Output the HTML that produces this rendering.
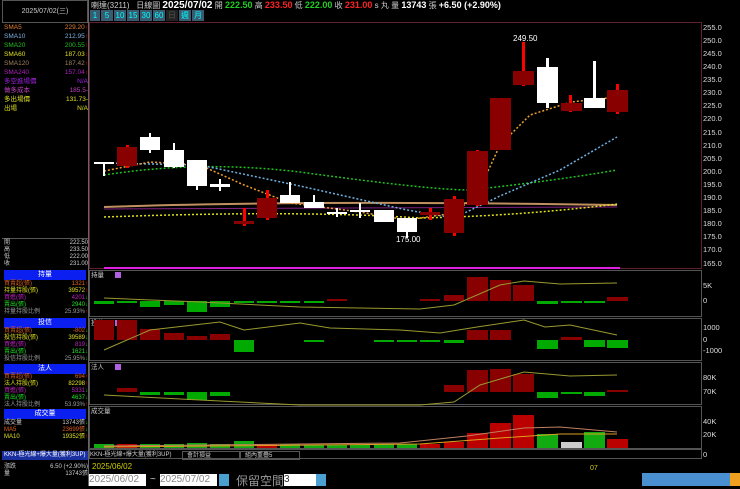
<!DOCTYPE html><html><head><meta charset="utf-8"><style>
*{margin:0;padding:0;box-sizing:border-box}
body{width:740px;height:486px;background:#000;overflow:hidden;position:relative;font-family:"Liberation Sans","Noto Sans CJK TC",sans-serif;font-size:8px;color:#ccc}
.a{position:absolute;white-space:nowrap}
.row{position:absolute;left:4px;width:84px;height:9px;font-size:6.5px;line-height:8px}
.s .row{line-height:7px;height:7px;font-size:6px}
.row span{position:absolute;right:0}
.hd{position:absolute;left:4px;width:82px;height:10px;background:#0a1ff0;color:#fff;text-align:center;font-size:7px;line-height:10px}
</style></head><body>
<div class="a" style="left:0;top:0;width:89px;height:486px;border-right:1px solid #666"></div>
<div class="a" style="left:2px;top:0;width:86px;height:23px;border:1px solid #555;color:#ccc;font-size:7px;text-align:center;line-height:21px">2025/07/02(三)</div>
<div class="row" style="top:24px;color:#e08030">SMA5<span>229.20<b style="color:#f00">↑</b></span></div>
<div class="row" style="top:33px;color:#7fb0e0">SMA10<span>212.95<b style="color:#f00">↑</b></span></div>
<div class="row" style="top:42px;color:#20c020">SMA20<span>200.55<b style="color:#f00">↑</b></span></div>
<div class="row" style="top:51px;color:#e0e020">SMA60<span>187.03<b style="color:#f00">↑</b></span></div>
<div class="row" style="top:60px;color:#a08060">SMA120<span>187.42<b style="color:#f00">↑</b></span></div>
<div class="row" style="top:69px;color:#b020c0">SMA240<span>157.04<b style="color:#f00">↑</b></span></div>
<div class="row" style="top:78px;color:#a020e0">多空進場價<span>N/A</span></div>
<div class="row" style="top:87px;color:#c040c0">做多成本<span>185.5-</span></div>
<div class="row" style="top:96px;color:#e0e020">多出場價<span>131.73-</span></div>
<div class="row" style="top:105px;color:#e0e020">出場<span>N/A</span></div>
<div class="a" style="left:2px;top:238px;width:86px;height:1px;background:#555"></div>
<div class="s">
<div class="row" style="top:240px">開<span>222.50</span></div>
<div class="row" style="top:247px">高<span>233.50</span></div>
<div class="row" style="top:254px">低<span>222.00</span></div>
<div class="row" style="top:261px">收<span>231.00</span></div>
<div class="hd" style="top:270px">持量</div>
<div class="row" style="top:281px;color:#e06020">買賣超(張)<span>1321<b style="color:#f00">↑</b></span></div>
<div class="row" style="top:288px;color:#e0e020">持量持股(張)<span>39572<b style="color:#f00">↑</b></span></div>
<div class="row" style="top:295px;color:#c020c0">買進(張)<span>4201<b style="color:#0c0">↓</b></span></div>
<div class="row" style="top:302px;color:#20e020">賣出(張)<span>2940<b style="color:#0c0">↓</b></span></div>
<div class="row" style="top:309px;color:#999">持量持股比例<span>25.93%<b style="color:#f00">↑</b></span></div>
<div class="hd" style="top:318px">投信</div>
<div class="row" style="top:328px;color:#e06020">買賣超(張)<span>-802<b style="color:#0c0">↓</b></span></div>
<div class="row" style="top:335px;color:#e0e020">投信持股(張)<span>39589<b style="color:#0c0">↓</b></span></div>
<div class="row" style="top:342px;color:#c020c0">買進(張)<span>819<b style="color:#0c0">↓</b></span></div>
<div class="row" style="top:349px;color:#20e020">賣出(張)<span>1621<b style="color:#0c0">↓</b></span></div>
<div class="row" style="top:356px;color:#999">投信持股比例<span>25.95%<b style="color:#0c0">↓</b></span></div>
<div class="hd" style="top:364px">法人</div>
<div class="row" style="top:374px;color:#e06020">買賣超(張)<span>694<b style="color:#f00">↑</b></span></div>
<div class="row" style="top:381px;color:#e0e020">法人持股(張)<span>82298<b style="color:#f00">↑</b></span></div>
<div class="row" style="top:388px;color:#c020c0">買進(張)<span>5331<b style="color:#0c0">↓</b></span></div>
<div class="row" style="top:395px;color:#20e020">賣出(張)<span>4637<b style="color:#0c0">↓</b></span></div>
<div class="row" style="top:402px;color:#999">法人持股比例<span>53.93%<b style="color:#f00">↑</b></span></div>
<div class="hd" style="top:409px">成交量</div>
<div class="row" style="top:420px;color:#ccc">成交量<span>13743張<b style="color:#0c0">↓</b></span></div>
<div class="row" style="top:427px;color:#e06020">MA5<span>23699張<b style="color:#0c0">↓</b></span></div>
<div class="row" style="top:434px;color:#e0e020">MA10<span>19352張<b style="color:#f00">↑</b></span></div>
<div class="row" style="top:464px">漲跌<span>6.50 (+2.90%)</span></div>
<div class="row" style="top:471px">量<span>13743張</span></div>
</div>
<div class="a" style="left:2px;top:451px;width:86px;height:9px;background:#1a2fa0;color:#fff;font-size:6px;line-height:9px;padding-left:2px">KKN-極光線+爆大量(獲利3UP)</div>
<div class="a" style="left:91px;top:0;font-size:8px;line-height:10px;color:#ccc">喇達(3211)&nbsp;&nbsp;&nbsp;日線圖 <b style="color:#fff;font-size:10px">2025/07/02</b> 開 <b style="color:#2c2;font-size:9px">222.50</b> 高 <b style="color:#f22;font-size:9px">233.50</b> 低 <b style="color:#2c2;font-size:9px">222.00</b> 收 <b style="color:#f22;font-size:9px">231.00</b> s 丸 量 <b style="color:#fff;font-size:9px">13743</b> 張 <b style="color:#fff;font-size:9px">+6.50 (+2.90%)</b></div>
<div class="a" style="left:90px;top:10px;height:11px;display:flex;gap:1px">
<span style="background:#3a5a70;color:#0ff;width:10px;font-size:8px;text-align:center;line-height:11px">1</span><span style="background:#3a5a70;color:#0ff;width:12px;text-align:center;line-height:11px">5</span><span style="background:#3a5a70;color:#0ff;width:12px;text-align:center;line-height:11px">10</span><span style="background:#3a5a70;color:#0ff;width:12px;text-align:center;line-height:11px">15</span><span style="background:#3a5a70;color:#0ff;width:12px;text-align:center;line-height:11px">30</span><span style="background:#3a5a70;color:#0ff;width:12px;text-align:center;line-height:11px">60</span><span style="background:#222;color:#555;width:12px;text-align:center;line-height:11px">日</span><span style="background:#3a5a70;color:#0ff;width:12px;text-align:center;line-height:11px">週</span><span style="background:#3a5a70;color:#0ff;width:12px;text-align:center;line-height:11px">月</span></div>
<svg class="a" style="left:0;top:0" width="740" height="486" font-family="Liberation Sans" font-size="7.5">
<rect x="89.5" y="22.5" width="243" height="0" stroke="#602030"/>
<rect x="89.5" y="22.5" width="612" height="246" fill="none" stroke="#602030"/>
<g fill="#ddd"><text x="703" y="30">255.0</text><text x="703" y="43">250.0</text><text x="703" y="56">245.0</text><text x="703" y="69">240.0</text><text x="703" y="82">235.0</text><text x="703" y="95">230.0</text><text x="703" y="108">225.0</text><text x="703" y="121">220.0</text><text x="703" y="135">215.0</text><text x="703" y="148">210.0</text><text x="703" y="161">205.0</text><text x="703" y="174">200.0</text><text x="703" y="187">195.0</text><text x="703" y="200">190.0</text><text x="703" y="213">185.0</text><text x="703" y="226">180.0</text><text x="703" y="239">175.0</text><text x="703" y="252">170.0</text><text x="703" y="266">165.0</text></g>
<path d="M104 207 Q300 200 617 205" stroke="#c09060" stroke-width="2" fill="none"/>
<path d="M104 209 L617 207" stroke="#802080" stroke-width="1" fill="none"/>
<path d="M104 217 Q300 210 420 218 Q520 216 617 204" stroke="#e0e020" stroke-width="1.5" stroke-dasharray="2,2" fill="none"/>
<path d="M104 175 Q200 160 300 172 Q430 190 470 190 Q560 180 617 170" stroke="#20c020" stroke-width="1.5" stroke-dasharray="2,2" fill="none"/>
<path d="M104 163 L200 165 L300 186 L407 210 L454 218 L500 196 L560 170 L617 137" stroke="#70b0e0" stroke-width="1.5" stroke-dasharray="2,2" fill="none"/>
<path d="M104 171 L150 162 L200 165 L244 185 L290 203 L360 212 L407 220 L454 213 L477 195 L500 145 L530 115 L571 102 L617 97" stroke="#f0a030" stroke-width="1.5" stroke-dasharray="2,2" fill="none"/>
<g fill="#fff" stroke="none">
<rect x="103" y="162" width="2" height="14"/><rect x="94" y="162" width="20" height="2"/>
<rect x="149" y="133" width="2" height="20"/><rect x="140" y="137" width="20" height="13"/>
<rect x="173" y="143" width="2" height="25"/><rect x="164" y="150" width="20" height="17"/>
<rect x="196" y="160" width="2" height="30"/><rect x="187" y="160" width="20" height="26"/>
<rect x="219" y="179" width="2" height="12"/><rect x="210" y="184" width="20" height="3"/>
<rect x="289" y="182" width="2" height="21"/><rect x="280" y="195" width="20" height="8"/>
<rect x="313" y="195" width="2" height="12"/><rect x="304" y="202" width="20" height="6"/>
<rect x="336" y="208" width="2" height="9"/><rect x="327" y="212" width="20" height="2"/>
<rect x="359" y="203" width="2" height="15"/><rect x="350" y="210" width="20" height="2"/>
<rect x="383" y="210" width="2" height="12"/><rect x="374" y="210" width="20" height="12"/>
<rect x="406" y="218" width="2" height="20"/><rect x="397" y="218" width="20" height="14"/>
<rect x="546" y="58" width="3" height="50"/><rect x="537" y="67" width="21" height="36"/>
<rect x="593" y="61" width="3" height="45"/><rect x="584" y="98" width="21" height="10"/>
</g>
<g>
<rect x="126" y="145" width="3" height="23" fill="#f00"/><rect x="117" y="147" width="20" height="19" fill="#800"/>
<rect x="243" y="208" width="3" height="18" fill="#f00"/><rect x="234" y="221" width="20" height="3" fill="#800"/>
<rect x="266" y="190" width="3" height="30" fill="#f00"/><rect x="257" y="198" width="20" height="20" fill="#800"/>
<rect x="429" y="208" width="3" height="12" fill="#f00"/><rect x="420" y="212" width="20" height="3" fill="#800"/>
<rect x="453" y="196" width="3" height="40" fill="#f00"/><rect x="444" y="199" width="20" height="34" fill="#800"/>
<rect x="476" y="150" width="3" height="56" fill="#f00"/><rect x="467" y="151" width="21" height="54" fill="#800"/>
<rect x="499" y="98" width="3" height="52" fill="#f00"/><rect x="490" y="98" width="21" height="52" fill="#800"/>
<rect x="522" y="42" width="3" height="44" fill="#f00"/><rect x="513" y="71" width="21" height="14" fill="#800"/>
<rect x="569" y="95" width="3" height="17" fill="#f00"/><rect x="561" y="103" width="21" height="8" fill="#800"/>
<rect x="616" y="84" width="3" height="30" fill="#f00"/><rect x="607" y="90" width="21" height="22" fill="#800"/>
</g>
<text x="513" y="41" fill="#fff" font-size="8">249.50</text>
<text x="396" y="242" fill="#fff" font-size="8">175.00</text>
<rect x="104" y="267" width="516" height="2" fill="#e020e0"/>
<g fill="none" stroke="#555"><rect x="89.5" y="270.5" width="612" height="46"/><rect x="89.5" y="318.5" width="612" height="42"/><rect x="89.5" y="362.5" width="612" height="42"/><rect x="89.5" y="406.5" width="612" height="42"/><rect x="89.5" y="449.5" width="612" height="9"/></g>
<g fill="#ccc" font-size="6.5"><text x="91" y="277">持量</text><text x="91" y="325">投信</text><text x="91" y="369">法人</text><text x="91" y="413">成交量</text></g>
<g fill="#b060e0"><rect x="115" y="272" width="6" height="6"/><rect x="115" y="320" width="6" height="6"/><rect x="115" y="364" width="6" height="6"/></g>
<g fill="#ddd" font-size="7.5"><text x="703" y="288">5K</text><text x="703" y="303">0</text><text x="703" y="330">1000</text><text x="703" y="342">0</text><text x="703" y="353">-1000</text><text x="703" y="380">80K</text><text x="703" y="394">70K</text><text x="703" y="424">40K</text><text x="703" y="437">20K</text><text x="703" y="457">0</text></g>
<g fill="#0a0"><rect x="94" y="301" width="20" height="3"/><rect x="117" y="301" width="20" height="2"/><rect x="140" y="301" width="20" height="6"/><rect x="164" y="301" width="20" height="4"/><rect x="187" y="301" width="20" height="11"/><rect x="210" y="301" width="20" height="6"/><rect x="234" y="301" width="20" height="2"/><rect x="257" y="301" width="20" height="2"/><rect x="280" y="301" width="20" height="2"/><rect x="304" y="301" width="20" height="2"/><rect x="537" y="301" width="21" height="3"/><rect x="561" y="301" width="21" height="2"/><rect x="584" y="301" width="21" height="2"/></g>
<g fill="#800"><rect x="327" y="299" width="20" height="2"/><rect x="420" y="299" width="20" height="2"/><rect x="444" y="295" width="20" height="6"/><rect x="467" y="277" width="21" height="24"/><rect x="490" y="280" width="21" height="21"/><rect x="513" y="285" width="21" height="16"/><rect x="607" y="297" width="21" height="4"/></g>
<path d="M104 298 L200 302 L300 307 L420 309 L454 305 L500 285 L524 281 L560 284 L617 283" stroke="#999a30" fill="none"/>
<g fill="#800"><rect x="94" y="320" width="20" height="20"/><rect x="117" y="320" width="20" height="20"/><rect x="140" y="329" width="20" height="11"/><rect x="164" y="333" width="20" height="7"/><rect x="187" y="336" width="20" height="4"/><rect x="210" y="334" width="20" height="6"/><rect x="467" y="330" width="21" height="10"/><rect x="490" y="330" width="21" height="10"/><rect x="561" y="337" width="21" height="3"/></g>
<g fill="#0a0"><rect x="234" y="340" width="20" height="12"/><rect x="304" y="340" width="20" height="2"/><rect x="374" y="340" width="20" height="2"/><rect x="397" y="340" width="20" height="2"/><rect x="420" y="340" width="20" height="2"/><rect x="444" y="340" width="20" height="3"/><rect x="537" y="340" width="21" height="9"/><rect x="584" y="340" width="21" height="7"/><rect x="607" y="340" width="21" height="8"/></g>
<path d="M104 350 L150 330 L220 322 L244 330 L300 323 L330 328 L400 330 L440 333 L477 327 L524 320 L545 327 L570 325 L617 335" stroke="#999a30" fill="none"/>
<g fill="#800"><rect x="117" y="388" width="20" height="4"/><rect x="444" y="385" width="20" height="7"/><rect x="467" y="370" width="21" height="22"/><rect x="490" y="369" width="21" height="23"/><rect x="513" y="374" width="21" height="18"/><rect x="607" y="390" width="21" height="2"/></g>
<g fill="#0a0"><rect x="140" y="392" width="20" height="3"/><rect x="164" y="392" width="20" height="3"/><rect x="187" y="392" width="20" height="8"/><rect x="210" y="392" width="20" height="4"/><rect x="537" y="392" width="21" height="6"/><rect x="561" y="392" width="21" height="2"/><rect x="584" y="392" width="21" height="4"/></g>
<path d="M104 395 L200 400 L300 405 L420 405 L454 402 L480 385 L524 372 L570 376 L617 375" stroke="#999a30" fill="none"/>
<g fill="#1a1"><rect x="94" y="444" width="20" height="4"/><rect x="140" y="444" width="20" height="4"/><rect x="164" y="444" width="20" height="4"/><rect x="187" y="443" width="20" height="5"/><rect x="210" y="444" width="20" height="4"/><rect x="234" y="441" width="20" height="7"/><rect x="280" y="444" width="20" height="4"/><rect x="304" y="445" width="20" height="3"/><rect x="327" y="445" width="20" height="3"/><rect x="350" y="445" width="20" height="3"/><rect x="374" y="444" width="20" height="4"/><rect x="397" y="444" width="20" height="4"/><rect x="537" y="434" width="21" height="14"/><rect x="584" y="432" width="21" height="16"/></g>
<g fill="#b00"><rect x="117" y="444" width="20" height="4"/><rect x="257" y="444" width="20" height="4"/><rect x="420" y="444" width="20" height="4"/><rect x="444" y="442" width="20" height="6"/><rect x="467" y="433" width="21" height="15"/><rect x="490" y="423" width="21" height="25"/><rect x="513" y="415" width="21" height="33"/><rect x="607" y="439" width="21" height="9"/></g>
<rect x="561" y="442" width="21" height="6" fill="#ccc"/>
<path d="M104 446 L400 443 L467 436 L524 428 L560 427 L617 432" stroke="#c08060" fill="none"/>
<path d="M104 447 L420 444 L500 438 L560 434 L617 434" stroke="#e0a020" fill="none"/>
<text x="590" y="470" fill="#cc0" font-size="7">07</text>
</svg>
<div class="a" style="left:90px;top:451px;width:170px;height:9px;color:#ccc;font-size:6px;line-height:9px">KKN-極光線+爆大量(獲利3UP)</div>
<div class="a" style="left:182px;top:451px;width:58px;height:9px;border:1px solid #555;color:#ccc;font-size:6px;line-height:8px;padding-left:4px">會計損益</div>
<div class="a" style="left:240px;top:451px;width:60px;height:9px;border:1px solid #555;color:#ccc;font-size:6px;line-height:8px;padding-left:4px">組內重疊5</div>
<div class="a" style="left:92px;top:462px;color:#cc0;font-size:8px">2025/06/02</div>
<div class="a" style="left:89px;top:474px;width:57px;height:12px;background:#fff;color:#888;font-size:10px;line-height:12px">2025/06/02</div>
<div class="a" style="left:160px;top:474px;width:57px;height:12px;background:#fff;color:#888;font-size:10px;line-height:12px">2025/07/02</div>
<div class="a" style="left:150px;top:474px;color:#ccc;font-size:10px">~</div>
<div class="a" style="left:219px;top:474px;width:10px;height:12px;background:#4aa0d0"></div>
<div class="a" style="left:236px;top:472px;color:#999;font-size:12px">保留空間</div>
<div class="a" style="left:284px;top:474px;width:32px;height:12px;background:#fff;color:#333;font-size:10px;line-height:12px">3</div>
<div class="a" style="left:316px;top:474px;width:10px;height:12px;background:#4aa0d0"></div>
<div class="a" style="left:642px;top:473px;width:98px;height:13px;background:#4a90d0"></div>
<div class="a" style="left:730px;top:473px;width:10px;height:13px;background:#f0a020"></div>
</body></html>
